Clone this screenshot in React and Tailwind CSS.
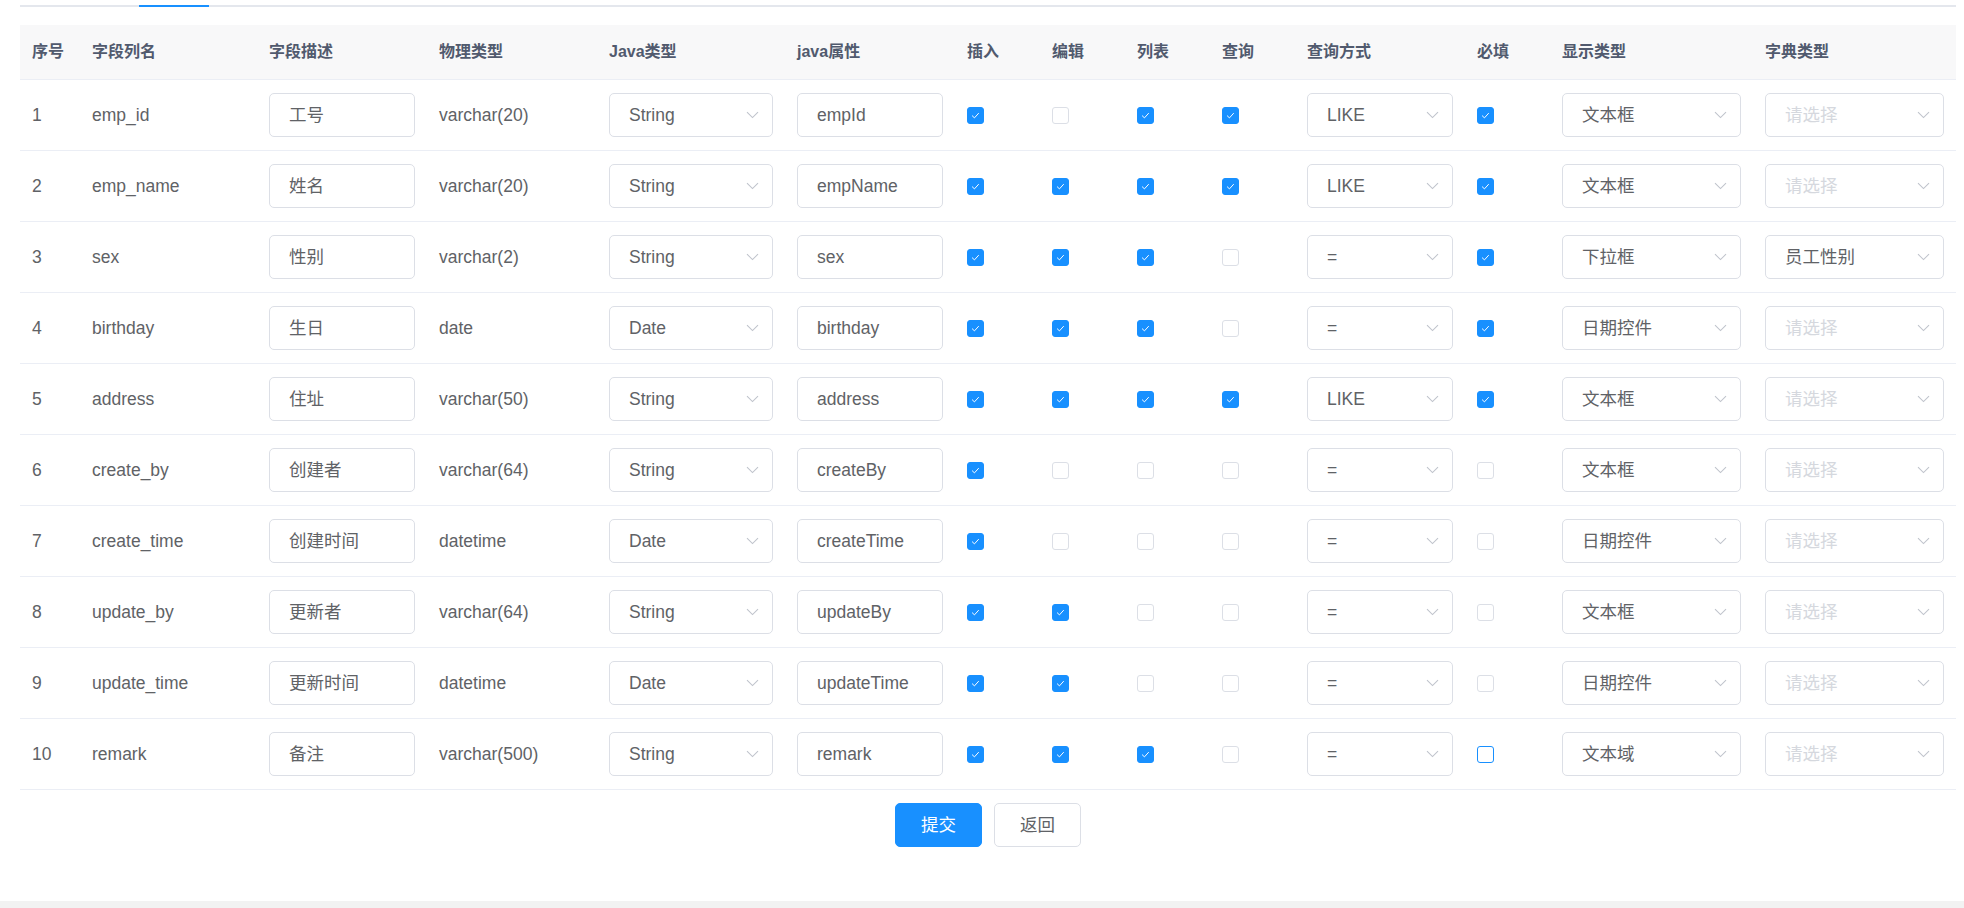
import React from "react";

const rows = [
  ["1", "emp_id", "工号", "varchar(20)", "String", "empId", [1, 0, 1, 1], "LIKE", 1, "文本框", ""],
  ["2", "emp_name", "姓名", "varchar(20)", "String", "empName", [1, 1, 1, 1], "LIKE", 1, "文本框", ""],
  ["3", "sex", "性别", "varchar(2)", "String", "sex", [1, 1, 1, 0], "=", 1, "下拉框", "员工性别"],
  ["4", "birthday", "生日", "date", "Date", "birthday", [1, 1, 1, 0], "=", 1, "日期控件", ""],
  ["5", "address", "住址", "varchar(50)", "String", "address", [1, 1, 1, 1], "LIKE", 1, "文本框", ""],
  ["6", "create_by", "创建者", "varchar(64)", "String", "createBy", [1, 0, 0, 0], "=", 0, "文本框", ""],
  ["7", "create_time", "创建时间", "datetime", "Date", "createTime", [1, 0, 0, 0], "=", 0, "日期控件", ""],
  ["8", "update_by", "更新者", "varchar(64)", "String", "updateBy", [1, 1, 0, 0], "=", 0, "文本框", ""],
  ["9", "update_time", "更新时间", "datetime", "Date", "updateTime", [1, 1, 0, 0], "=", 0, "日期控件", ""],
  ["10", "remark", "备注", "varchar(500)", "String", "remark", [1, 1, 1, 0], "=", 2, "文本域", ""],
];

const headers = ["序号", "字段列名", "字段描述", "物理类型", "Java类型", "java属性", "插入", "编辑", "列表", "查询", "查询方式", "必填", "显示类型", "字典类型"];

const GRID =
  "grid grid-cols-[60px_177px_170px_170px_188px_170px_85px_85px_85px_85px_170px_85px_203px_203px]";

function Chevron() {
  return (
    <svg width="13" height="8" viewBox="0 0 13 8" className="shrink-0">
      <path d="M1 1.2 L6.5 6.6 L12 1.2" fill="none" stroke="#c0c4cc" strokeWidth="1.1" />
    </svg>
  );
}

function Checkbox({ state }) {
  if (state === 1) {
    return (
      <div className="w-[17px] h-[17px] rounded-[3px] bg-[#1890ff] border border-[#1890ff] flex items-center justify-center">
        <svg width="17" height="17" viewBox="0 0 17 17">
          <path d="M4.6 8.6 L7.3 11.2 L12.2 5.8" fill="none" stroke="#ffffff" strokeWidth="1.1" />
        </svg>
      </div>
    );
  }
  if (state === 2) {
    return <div className="w-[17px] h-[17px] rounded-[3px] bg-white border border-[#1890ff]" />;
  }
  return <div className="w-[17px] h-[17px] rounded-[3px] bg-white border border-[#dcdfe6]" />;
}

function Input({ value }) {
  return (
    <div className="w-full h-[44px] rounded-[5px] border border-[#dcdfe6] bg-white flex items-center pl-[19px] text-[#606266]">
      {value}
    </div>
  );
}

function Select({ value, placeholder }) {
  return (
    <div className="w-full h-[44px] rounded-[5px] border border-[#dcdfe6] bg-white flex items-center justify-between pl-[19px] pr-[13px]">
      {value ? (
        <span className="text-[#606266]">{value}</span>
      ) : (
        <span className="text-[#d5d8de]">{placeholder}</span>
      )}
      <Chevron />
    </div>
  );
}

export default function App() {
  return (
    <div
      className="w-[1964px] h-[908px] bg-white flex flex-col overflow-hidden"
      style={{ fontFamily: '"Liberation Sans", Arial, "Noto Sans CJK SC", sans-serif' }}
    >
      <div className="pl-5 pr-2 flex-1 flex flex-col">
        <div className="h-[5px]" />
        <div className="relative h-[2px] bg-[#e4e7ed]">
          <div className="absolute left-[119px] top-0 w-[70px] h-[2px] bg-[#1890ff]" />
        </div>
        <div className="h-[18px]" />
        <div className="w-[1936px]">
          <div className={`${GRID} h-[55px] bg-[#f8f8f9] border-b border-[#ebeef5] text-[16px] font-bold text-[#515a6e]`}>
            {headers.map((h) => (
              <div key={h} className="px-3 flex items-center whitespace-nowrap">
                {h}
              </div>
            ))}
          </div>
          {rows.map((r) => (
            <div
              key={r[0]}
              className={`${GRID} h-[71px] border-b border-[#ebeef5] text-[17.5px] text-[#606266]`}
            >
              <div className="px-3 flex items-center">{r[0]}</div>
              <div className="px-3 flex items-center">{r[1]}</div>
              <div className="px-3 flex items-center">
                <Input value={r[2]} />
              </div>
              <div className="px-3 flex items-center">{r[3]}</div>
              <div className="px-3 flex items-center">
                <Select value={r[4]} />
              </div>
              <div className="px-3 flex items-center">
                <Input value={r[5]} />
              </div>
              {r[6].map((c, i) => (
                <div key={i} className="px-3 flex items-center">
                  <Checkbox state={c} />
                </div>
              ))}
              <div className="px-3 flex items-center">
                <Select value={r[7]} />
              </div>
              <div className="px-3 flex items-center">
                <Checkbox state={r[8]} />
              </div>
              <div className="px-3 flex items-center">
                <Select value={r[9]} />
              </div>
              <div className="px-3 flex items-center">
                <Select value={r[10]} placeholder="请选择" />
              </div>
            </div>
          ))}
          <div className="flex justify-center gap-3 mt-[13px] text-[17.5px]">
            <button className="w-[87px] h-[44px] rounded-[5px] bg-[#1890ff] border border-[#1890ff] text-white flex items-center justify-center">
              提交
            </button>
            <button className="w-[87px] h-[44px] rounded-[5px] bg-white border border-[#dcdfe6] text-[#606266] flex items-center justify-center">
              返回
            </button>
          </div>
        </div>
      </div>
      <div className="h-[7px] bg-[#f2f2f2]" />
    </div>
  );
}
